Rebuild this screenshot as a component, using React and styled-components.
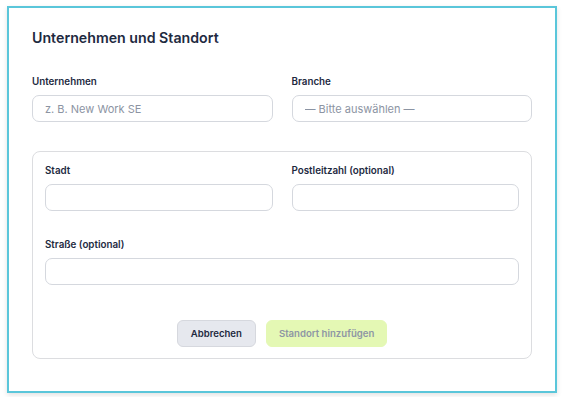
import React from 'react';
import styled, { createGlobalStyle } from 'styled-components';

const GlobalStyle = createGlobalStyle`
  body {
    margin: 0;
    background: #ffffff;
    font-family: Inter, "Liberation Sans", Arial, sans-serif;
  }
`;

const Page = styled.div`
  padding: 6px 8px 5px 7px;
`;

const Card = styled.div`
  width: 550px;
  box-sizing: border-box;
  border: 2px solid #5ac6da;
  background: #fff;
  padding: 20px 23px 32px;
  box-shadow: 0 2px 5px rgba(0, 0, 0, 0.12);
`;

const Title = styled.h2`
  margin: 0 0 27px;
  font-size: 14.2px;
  line-height: 20px;
  font-weight: 600;
  color: #1e2a3f;
`;

const Grid = styled.div`
  display: grid;
  grid-template-columns: ${p => p.$single ? '1fr' : '1fr 1fr'};
  column-gap: 19px;
  margin-bottom: ${p => p.$gap || 0}px;
`;

const Field = styled.label`
  display: flex;
  flex-direction: column;
  gap: 6px;
`;

const Label = styled.span`
  font-size: 9.8px;
  line-height: 14px;
  font-weight: 600;
  color: #1e2a3f;
`;

const Input = styled.input`
  height: 27px;
  box-sizing: border-box;
  border: 1px solid #d5d8de;
  border-radius: 7px;
  padding: 0 12px;
  font-family: inherit;
  font-size: 11px;
  color: #1e2a3f;
  background: #fff;
  outline: none;

  &::placeholder {
    color: #8c94a3;
  }
`;

const Panel = styled.div`
  border: 1px solid #dcdde0;
  border-radius: 8px;
  padding: 12px 12px 11px;
`;

const Actions = styled.div`
  display: flex;
  justify-content: center;
  gap: 10px;
`;

const Button = styled.button`
  height: 27px;
  padding: 0 ${p => p.$primary ? 12 : 13}px;
  border-radius: 6px;
  font-family: inherit;
  font-size: 9.6px;
  font-weight: 600;
  cursor: pointer;
  border: 1px solid ${p => p.$primary ? '#e4f8b4' : '#d6d8de'};
  background: ${p => p.$primary ? '#e4f8b4' : '#e6e8ee'};
  color: ${p => p.$primary ? '#8e96a4' : '#1e2a3f'};
`;

export default function App() {
  return (
    <>
      <GlobalStyle />
      <Page>
        <Card>
          <Title>Unternehmen und Standort</Title>
          <Grid $gap={29}>
            <Field>
              <Label>Unternehmen</Label>
              <Input placeholder="z. B. New Work SE" />
            </Field>
            <Field>
              <Label>Branche</Label>
              <Input placeholder="— Bitte auswählen —" />
            </Field>
          </Grid>
          <Panel>
            <Grid $gap={27}>
              <Field>
                <Label>Stadt</Label>
                <Input />
              </Field>
              <Field>
                <Label>Postleitzahl (optional)</Label>
                <Input />
              </Field>
            </Grid>
            <Grid $single $gap={35}>
              <Field>
                <Label>Straße (optional)</Label>
                <Input />
              </Field>
            </Grid>
            <Actions>
              <Button type="button">Abbrechen</Button>
              <Button type="button" $primary>Standort hinzufügen</Button>
            </Actions>
          </Panel>
        </Card>
      </Page>
    </>
  );
}
